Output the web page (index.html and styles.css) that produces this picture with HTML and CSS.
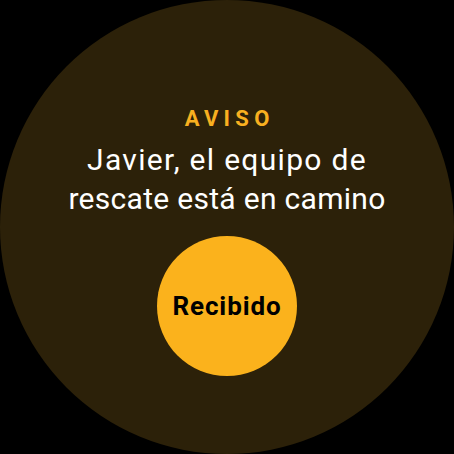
FILE: index.html
```html
<!DOCTYPE html>
<html lang="es">
<head>
<meta charset="utf-8">
<link rel="stylesheet" href="styles.css">
</head>
<body>
<div class="screen">
  <div class="face">
    <div class="title">AVISO</div>
    <div class="message"><span class="line line-a">Javier, el equipo de</span><span class="line line-b">rescate está en camino</span></div>
    <button class="ack">Recibido</button>
  </div>
</div>
</body>
</html>
```
FILE: styles.css
```css
html, body {
  margin: 0;
  padding: 0;
  background: #000;
}
.screen {
  width: 454px;
  height: 454px;
  background: #000;
}
.face {
  width: 454px;
  height: 454px;
  border-radius: 50%;
  background: #2c2109;
  display: flex;
  flex-direction: column;
  align-items: center;
  font-family: Roboto, "Noto Sans", sans-serif;
  box-sizing: border-box;
  padding-top: 105px;
}
.title {
  color: #f8b020;
  font-size: 22px;
  font-weight: 700;
  letter-spacing: 5.3px;
  padding-left: 5.3px;
  line-height: 28px;
}
.message {
  margin-top: 8px;
  color: #fff;
  font-size: 30px;
  line-height: 38.5px;
  text-align: center;
  display: flex;
  flex-direction: column;
  align-items: center;
}
.line-a {
  letter-spacing: 1.3px;
}
.line-b {
  letter-spacing: 0.3px;
}
.ack {
  margin-top: 18px;
  width: 140px;
  height: 140px;
  border-radius: 50%;
  border: none;
  background: #fbb21c;
  color: #000;
  font-family: Roboto, sans-serif;
  font-size: 26px;
  font-weight: 700;
  letter-spacing: 0.9px;
  padding: 0;
}
```
